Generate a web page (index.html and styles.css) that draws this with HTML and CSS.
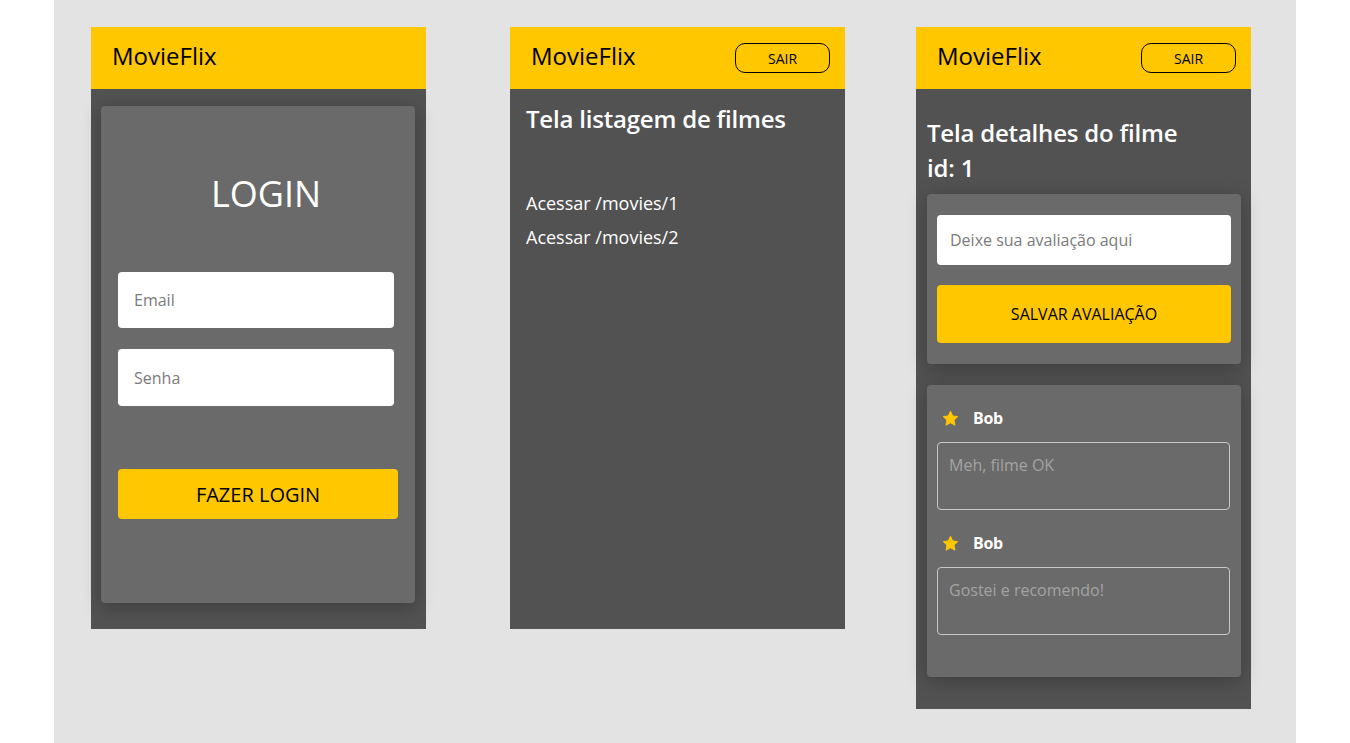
FILE: index.html
```html
<!DOCTYPE html>
<html lang="pt-BR">
<head>
<meta charset="utf-8">
<title>MovieFlix</title>
<link rel="stylesheet" href="styles.css">
</head>
<body>
<div class="stage">
  <section class="phone phone-login">
    <header class="topbar"><span class="brand">MovieFlix</span></header>
    <main class="screen screen-login">
      <div class="card login-card">
        <h1 class="login-title">LOGIN</h1>
        <input class="field field-email" type="text" placeholder="Email">
        <input class="field field-pass" type="password" placeholder="Senha">
        <button class="btn-primary login-btn" type="button">FAZER LOGIN</button>
      </div>
    </main>
  </section>

  <section class="phone phone-list">
    <header class="topbar"><span class="brand">MovieFlix</span><button class="btn-logout" type="button">SAIR</button></header>
    <main class="screen screen-list">
      <h2 class="page-title">Tela listagem de filmes</h2>
      <ul class="movie-links">
        <li><a href="#">Acessar /movies/1</a></li>
        <li><a href="#">Acessar /movies/2</a></li>
      </ul>
    </main>
  </section>

  <section class="phone phone-detail">
    <header class="topbar"><span class="brand">MovieFlix</span><button class="btn-logout" type="button">SAIR</button></header>
    <main class="screen screen-detail">
      <h2 class="page-title detail-title">Tela detalhes do filme<br>id: 1</h2>
      <div class="card review-form">
        <input class="field review-field" type="text" placeholder="Deixe sua avaliação aqui">
        <button class="btn-primary save-btn" type="button">SALVAR AVALIAÇÃO</button>
      </div>
      <div class="card review-list">
        <div class="review">
          <div class="review-author">
            <svg class="star" viewBox="0 0 24 24" width="17" height="17"><path d="M12 1.8l3.1 6.6 7.1.9-5.2 5 1.3 7.1L12 18l-6.3 3.4 1.3-7.1-5.2-5 7.1-.9z" fill="#ffc700" stroke="#ffc700" stroke-width="1.4" stroke-linejoin="round"/></svg>
            <span class="author-name">Bob</span>
          </div>
          <div class="review-text">Meh, filme OK</div>
        </div>
        <div class="review">
          <div class="review-author">
            <svg class="star" viewBox="0 0 24 24" width="17" height="17"><path d="M12 1.8l3.1 6.6 7.1.9-5.2 5 1.3 7.1L12 18l-6.3 3.4 1.3-7.1-5.2-5 7.1-.9z" fill="#ffc700" stroke="#ffc700" stroke-width="1.4" stroke-linejoin="round"/></svg>
            <span class="author-name">Bob</span>
          </div>
          <div class="review-text">Gostei e recomendo!</div>
        </div>
      </div>
    </main>
  </section>
</div>
</body>
</html>
```

FILE: styles.css
```css
* { box-sizing: border-box; }

html, body {
  margin: 0;
  padding: 0;
  background: #ffffff;
  font-family: "Open Sans", "Liberation Sans", sans-serif;
}

.stage {
  width: 1242px;
  min-height: 743px;
  margin: 0 auto;
  background: #e3e3e3;
  padding: 27px 0 0 37px;
  display: flex;
  align-items: flex-start;
}

.phone {
  width: 335px;
  min-height: 602px;
  background: #525252;
  display: flex;
  flex-direction: column;
}

.phone-list { margin-left: 84px; }
.phone-detail { margin-left: 71px; }

.topbar {
  height: 62px;
  background: #ffc700;
  display: flex;
  align-items: center;
  justify-content: space-between;
  padding: 0 15px 0 21px;
  flex-shrink: 0;
}

.brand {
  font-size: 24px;
  font-weight: 500;
  color: #000;
  line-height: 32px;
  padding-bottom: 4px;
}

.btn-logout {
  width: 95px;
  height: 30px;
  border: 1px solid #000;
  border-radius: 10px;
  background: transparent;
  font-family: inherit;
  font-size: 14px;
  font-weight: 500;
  color: #000;
  padding: 0;
}

.screen {
  flex: 1;
  display: flex;
  flex-direction: column;
}

.card {
  background: #6a6a6a;
  border-radius: 4px;
  box-shadow: 0 4px 20px rgba(0, 0, 0, 0.25);
}

/* Login */
.screen-login { padding: 17px 11px 26px 10px; }

.login-card {
  flex: 1;
  padding: 63px 17px 0 17px;
  display: flex;
  flex-direction: column;
}

.login-title {
  margin: 0 0 54px 0;
  font-size: 36px;
  font-weight: 400;
  line-height: 49px;
  color: #fff;
  text-align: center;
  padding-left: 16px;
}

.field {
  display: block;
  border: none;
  border-radius: 4px;
  background: #fff;
  font-family: inherit;
  font-size: 16px;
  color: #333;
  padding: 0 16px;
  outline: none;
}

.field::placeholder { color: #7b7b7b; }

.field-email { width: 276px; height: 56px; }
.field-pass { width: 276px; height: 57px; margin-top: 21px; }

.btn-primary {
  border: none;
  border-radius: 4px;
  background: #ffc700;
  font-family: inherit;
  font-weight: 500;
  color: #000;
  padding: 0;
}

.login-btn {
  width: 280px;
  height: 50px;
  margin-top: 63px;
  font-size: 20px;
}

/* List */
.screen-list { padding: 13px 16px 0 16px; }

.page-title {
  margin: 0;
  font-size: 24px;
  font-weight: 600;
  color: #fff;
  line-height: 33px;
  letter-spacing: -0.2px;
}

.movie-links {
  list-style: none;
  margin: 56px 0 0 0;
  padding: 0;
}

.movie-links li {
  height: 34px;
  line-height: 25px;
}

.movie-links a {
  color: #fff;
  text-decoration: none;
  font-size: 18px;
}

/* Detail */
.screen-detail { padding: 26px 10px 32px 11px; }

.detail-title {
  line-height: 35px;
  margin-bottom: 9px;
}

.review-form {
  padding: 21px 11px 21px 10px;
  display: flex;
  flex-direction: column;
}

.review-field {
  width: 294px;
  height: 50px;
  padding: 0 13px;
}

.save-btn {
  width: 294px;
  height: 58px;
  margin-top: 20px;
  font-size: 16px;
}

.review-list {
  margin-top: 21px;
  padding: 22px 11px 20px 10px;
}

.review { margin-bottom: 22px; }

.review-author {
  height: 22px;
  display: flex;
  align-items: center;
  padding-left: 5px;
  margin-bottom: 13px;
}

.star { flex-shrink: 0; }

.author-name {
  margin-left: 14px;
  font-size: 16px;
  font-weight: 700;
  color: #fff;
  letter-spacing: -0.3px;
}

.review-text {
  height: 68px;
  border: 1px solid #c8c8c8;
  border-radius: 4px;
  padding: 11px 11px;
  font-size: 16px;
  line-height: 22px;
  color: #a3a3a3;
}
```
